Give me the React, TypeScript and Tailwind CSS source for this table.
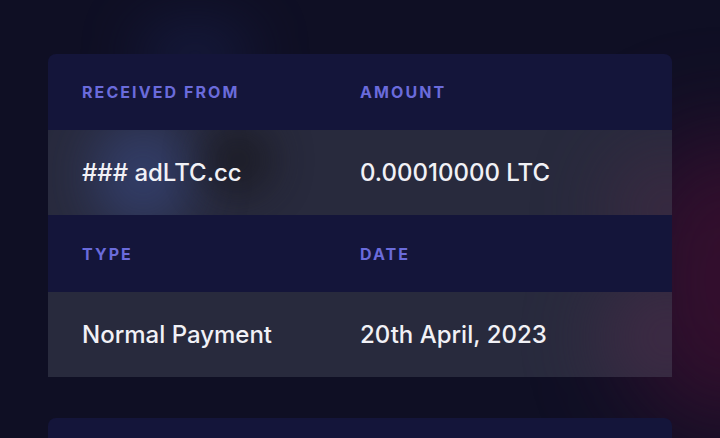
import React from "react";

const Label = ({ children }: { children: React.ReactNode }) => (
  <div className="text-[16px] font-bold tracking-[0.13em] text-[#6a6bdb] leading-none">{children}</div>
);
const Value = ({ children }: { children: React.ReactNode }) => (
  <div className="text-[24px] font-medium text-[#f1f1f6] leading-none">{children}</div>
);

export default function App() {
  return (
    <div
      className="relative w-[720px] h-[438px] overflow-hidden bg-[#0f0f24]"
      style={{ fontFamily: "Inter, 'Noto Sans', sans-serif" }}
    >
      {/* background glows */}
      <div className="pointer-events-none absolute right-[-110px] top-[130px] w-[200px] h-[300px] rounded-full bg-[#3d0f30] opacity-80 blur-[50px]" />
      <div className="pointer-events-none absolute left-[140px] top-[25px] w-[110px] h-[60px] rounded-full bg-[#1a2250] opacity-60 blur-[30px]" />

      <div className="relative flex flex-col gap-[41px] px-[48px] pt-[54px]">
        <div className="relative overflow-hidden rounded-t-[8px]">
          <div className="grid grid-cols-[278px_1fr] items-center h-[76px] bg-[#14153a] px-[34px]">
            <Label>RECEIVED FROM</Label>
            <Label>AMOUNT</Label>
          </div>
          <div className="relative grid grid-cols-[278px_1fr] items-center h-[85px] bg-[#282a3d] px-[34px] overflow-hidden">
            <div className="pointer-events-none absolute left-[45px] top-[-10px] w-[100px] h-[110px] rounded-full bg-[#3b4c88] opacity-60 blur-[28px]" />
            <div className="pointer-events-none absolute left-[155px] top-[-5px] w-[70px] h-[70px] rounded-full bg-[#1a1a22] opacity-80 blur-[20px]" />
            <div className="pointer-events-none absolute right-[-50px] top-[20px] w-[110px] h-[120px] rounded-full bg-[#4a2a45] opacity-60 blur-[40px]" />
            <div className="relative"><Value>### adLTC.cc</Value></div>
            <div className="relative"><Value>0.00010000 LTC</Value></div>
          </div>
          <div className="grid grid-cols-[278px_1fr] items-center h-[77px] bg-[#14153a] px-[34px]">
            <Label>TYPE</Label>
            <Label>DATE</Label>
          </div>
          <div className="relative grid grid-cols-[278px_1fr] items-center h-[85px] bg-[#282a3d] px-[34px] overflow-hidden">
            <div className="pointer-events-none absolute right-[-60px] top-[-20px] w-[130px] h-[130px] rounded-full bg-[#4b2a48] opacity-70 blur-[40px]" />
            <div className="relative"><Value>Normal Payment</Value></div>
            <div className="relative"><Value>20th April, 2023</Value></div>
          </div>
        </div>
        <div className="h-[60px] rounded-t-[8px] bg-[#14153a]" />
      </div>
    </div>
  );
}
